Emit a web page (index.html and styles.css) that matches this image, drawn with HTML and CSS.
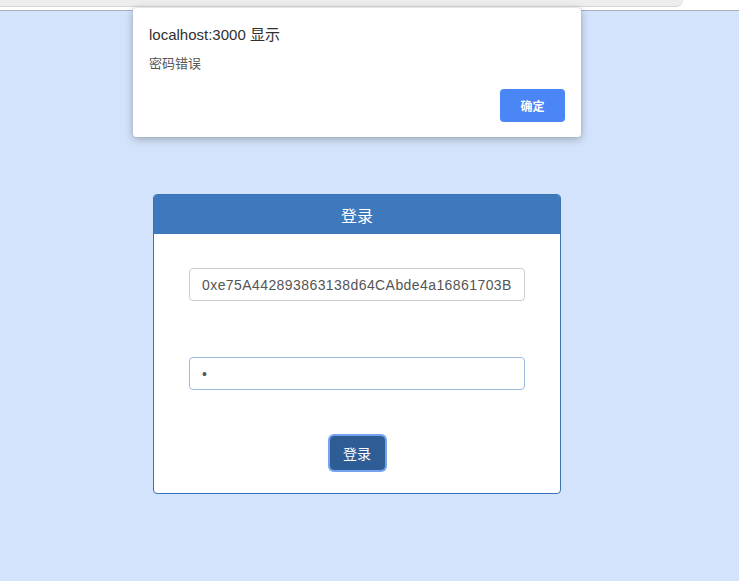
FILE: index.html
```html
<!DOCTYPE html>
<html lang="zh">
<head>
<meta charset="utf-8">
<title>登录</title>
<link rel="stylesheet" href="styles.css">
</head>
<body>
<div class="topbar"><div class="tab"></div></div>
<main class="page">
  <section class="panel">
    <header class="panel-head">登录</header>
    <div class="panel-body">
      <input class="field" type="text" value="0xe75A442893863138d64CAbde4a16861703B">
      <input class="field field-active" type="password" value="a">
      <button class="login-btn" type="button">登录</button>
    </div>
  </section>
</main>
<div class="dialog">
  <div class="dialog-title">localhost:3000 显示</div>
  <div class="dialog-msg">密码错误</div>
  <div class="dialog-actions"><button class="ok-btn" type="button">确定</button></div>
</div>
</body>
</html>
```

FILE: styles.css
```css
html, body {
  margin: 0;
  padding: 0;
}
body {
  width: 739px;
  height: 581px;
  overflow: hidden;
  background: #d3e3fb;
  font-family: "Liberation Sans", "Noto Sans CJK SC", sans-serif;
  position: relative;
}
.topbar {
  background: #ffffff;
  border-bottom: 1px solid #a9b1bd;
  box-sizing: border-box;
  height: 11px;
}
.tab {
  width: 683px;
  height: 7px;
  background: #ededed;
  border-bottom: 1px solid #d6d6d6;
  border-bottom-right-radius: 8px;
  box-sizing: border-box;
}
.page {
  padding-top: 183px;
  padding-left: 153px;
}
.panel {
  width: 408px;
  border: 1px solid #3a73b3;
  border-radius: 4px;
  background: #ffffff;
  box-sizing: border-box;
  overflow: hidden;
}
.panel-head {
  height: 39px;
  background: #3d79bc;
  color: #ffffff;
  font-size: 16px;
  display: flex;
  align-items: center;
  justify-content: center;
}
.panel-body {
  padding: 34px 35px 23px;
  display: flex;
  flex-direction: column;
  align-items: center;
}
.field {
  width: 336px;
  height: 33px;
  box-sizing: border-box;
  border: 1px solid #cccccc;
  border-radius: 4px;
  padding: 0 12px;
  font-family: "Liberation Sans", sans-serif;
  font-size: 14px;
  letter-spacing: 0.42px;
  color: #555555;
  outline: none;
  background: #ffffff;
}
.field + .field {
  margin-top: 56px;
}
.field-active {
  border-color: #9cbadd;
  letter-spacing: 0;
}
.login-btn {
  margin-top: 46px;
  width: 55px;
  height: 34px;
  border: 1px solid #2e5d96;
  border-radius: 4px;
  background: #2e5d96;
  color: #ffffff;
  font-family: "Liberation Sans", "Noto Sans CJK SC", sans-serif;
  font-size: 14px;
  padding: 0;
  box-shadow: 0 0 0 2px #75a3f0;
}
.dialog {
  position: absolute;
  left: 133px;
  top: 8px;
  width: 448px;
  height: 129px;
  box-sizing: border-box;
  background: #ffffff;
  border-radius: 3px;
  box-shadow: 0 2px 8px rgba(0, 0, 0, 0.28), 0 0 1px rgba(0, 0, 0, 0.25);
  padding: 17px 16px 0;
}
.dialog-title {
  font-size: 15px;
  line-height: 20px;
  color: #303030;
}
.dialog-msg {
  margin-top: 10px;
  font-size: 13px;
  line-height: 18px;
  color: #555555;
}
.dialog-actions {
  display: flex;
  justify-content: flex-end;
  margin-top: 16px;
}
.ok-btn {
  width: 65px;
  height: 33px;
  border: none;
  border-radius: 4px;
  background: #4a86f6;
  color: #ffffff;
  font-weight: bold;
  font-size: 12px;
  font-family: "Liberation Sans", "Noto Sans CJK SC", sans-serif;
  padding: 0;
}
```
